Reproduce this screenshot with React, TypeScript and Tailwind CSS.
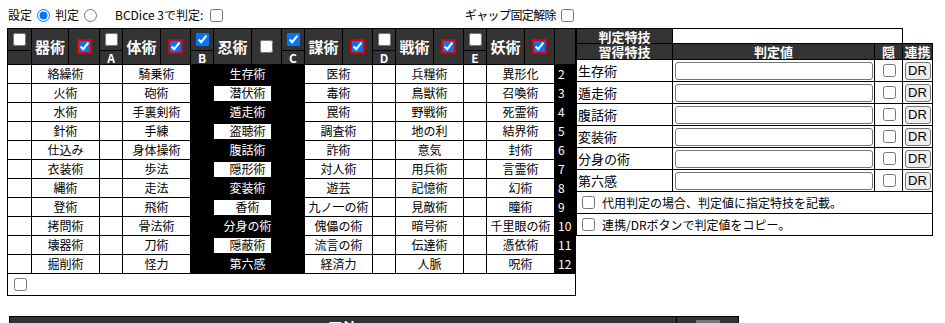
import React from "react";

const FONT = { fontFamily: '"Noto Sans CJK JP", "Liberation Sans", sans-serif' };

const cats = ["器術", "体術", "忍術", "謀術", "戦術", "妖術"];
const letters = ["", "A", "B", "C", "D", "E"];
const gapChecked = [false, false, true, true, false, false];
const catChecked = [true, true, false, true, true, true];

const rows: string[][] = [
  ["絡繰術", "騎乗術", "生存術", "医術", "兵糧術", "異形化"],
  ["火術", "砲術", "潜伏術", "毒術", "鳥獣術", "召喚術"],
  ["水術", "手裏剣術", "遁走術", "罠術", "野戦術", "死霊術"],
  ["針術", "手練", "盗聴術", "調査術", "地の利", "結界術"],
  ["仕込み", "身体操術", "腹話術", "詐術", "意気", "封術"],
  ["衣装術", "歩法", "隠形術", "対人術", "用兵術", "言霊術"],
  ["縄術", "走法", "変装術", "遊芸", "記憶術", "幻術"],
  ["登術", "飛術", "香術", "九ノ一の術", "見敵術", "瞳術"],
  ["拷問術", "骨法術", "分身の術", "傀儡の術", "暗号術", "千里眼の術"],
  ["壊器術", "刀術", "隠蔽術", "流言の術", "伝達術", "憑依術"],
  ["掘削術", "怪力", "第六感", "経済力", "人脈", "呪術"],
];

const learned = ["生存術", "遁走術", "腹話術", "変装術", "分身の術", "第六感"];

function Cb({ checked = false, red = false }: { checked?: boolean; red?: boolean }) {
  return (
    <input
      type="checkbox"
      defaultChecked={checked}
      className={
        "m-0 w-[13px] h-[13px] align-middle " +
        (red ? "outline-2 outline-solid outline-[#e00000] outline-offset-[-1px]" : "")
      }
    />
  );
}

function LeftTable() {
  const colW: number[] = [];
  for (let i = 0; i < 6; i++) {
    colW.push(23, 38, 30);
  }
  colW[0] = 24;
  colW[1] = 37;
  colW[2] = 31;
  colW.push(21);
  return (
    <table className="border-collapse table-fixed w-[568px] border border-black">
      <colgroup>
        {colW.map((w, i) => (
          <col key={i} style={{ width: w }} />
        ))}
      </colgroup>
      <tbody>
        <tr>
          {cats.map((c, i) => (
            <React.Fragment key={c}>
              <th className="bg-[#333] border border-black h-[22px] p-0 text-center">
                <div className="flex justify-center items-center">
                  <Cb checked={gapChecked[i]} />
                </div>
              </th>
              <th
                rowSpan={2}
                className="bg-[#333] border border-black p-0 text-white text-[15px] font-bold leading-none text-center"
              >
                {c}
              </th>
              <th rowSpan={2} className="bg-[#333] border border-black p-0 text-center">
                <div className="flex justify-center items-center">
                  <Cb checked={catChecked[i]} red={catChecked[i]} />
                </div>
              </th>
            </React.Fragment>
          ))}
          <th rowSpan={2} className="bg-[#333] border border-black p-0" />
        </tr>
        <tr>
          {letters.map((l, i) => (
            <th
              key={i}
              className="bg-[#333] border border-black h-[14px] p-0 text-white text-[12px] font-bold leading-none text-center"
            >
              {l}
            </th>
          ))}
        </tr>
        {rows.map((r, ri) => (
          <tr key={ri}>
            {r.map((s, ci) => {
              const ninja = ci === 2;
              const gapBlack = ci === 2 || ci === 3;
              return (
                <React.Fragment key={ci}>
                  <td
                    className={
                      "border border-black h-[19px] p-0 " + (gapBlack ? "bg-black" : "bg-white")
                    }
                  />
                  <td
                    colSpan={2}
                    className={
                      "border border-black h-[19px] p-0 text-[12px] leading-none text-center whitespace-nowrap " +
                      (ninja ? "bg-black text-white" : "bg-white text-black")
                    }
                  >
                    {ninja && !learned.includes(s) ? (
                      <div className="w-[57px] h-[15px] bg-white text-black flex items-center justify-center pl-[10px]">
                        {s}
                      </div>
                    ) : (
                      s
                    )}
                  </td>
                </React.Fragment>
              );
            })}
            <td className="border border-black bg-black text-white text-[12px] leading-none p-0 pl-[3px] h-[19px]">
              {ri + 2}
            </td>
          </tr>
        ))}
        <tr>
          <td colSpan={19} className="border border-black h-[22px] p-0 pl-[6px] bg-white">
            <div className="flex items-center">
              <Cb />
            </div>
          </td>
        </tr>
      </tbody>
    </table>
  );
}

function RightTable() {
  return (
    <table className="border-collapse table-fixed w-[356px]">
      <colgroup>
        <col style={{ width: 96 }} />
        <col style={{ width: 202 }} />
        <col style={{ width: 28 }} />
        <col style={{ width: 30 }} />
      </colgroup>
      <tbody>
        <tr>
          <th className="bg-[#333] border border-black h-[15px] p-0 text-white text-[13px] font-bold leading-[13px] text-center">
            判定特技
          </th>
          <td colSpan={2} className="border border-black bg-white p-0" />
          <td className="p-0" />
        </tr>
        <tr>
          {["習得特技", "判定値", "隠", "連携"].map((h) => (
            <th
              key={h}
              className="bg-[#333] border border-black h-[16px] p-0 text-white text-[13px] font-bold leading-[13px] text-center whitespace-nowrap"
            >
              {h}
            </th>
          ))}
        </tr>
        {learned.map((s) => (
          <tr key={s}>
            <td className="border border-black h-[22px] p-0 pl-[1px] text-[13px] leading-none text-black bg-white whitespace-nowrap">
              {s}
            </td>
            <td className="border border-black h-[22px] p-0 bg-white">
              <div className="flex justify-center items-center">
                <input
                  type="text"
                  className="w-[198px] h-[18px] border border-[#767676] rounded-[3px] bg-white px-[2px] text-[13px]"
                />
              </div>
            </td>
            <td className="border border-black h-[22px] p-0 bg-white">
              <div className="flex justify-center items-center pl-[2px]">
                <Cb />
              </div>
            </td>
            <td className="border border-black h-[22px] p-0 bg-white">
              <div className="flex justify-center items-center">
                <button
                  className="w-[26px] h-[18px] bg-[#efefef] border border-[#767676] rounded-[3px] text-[13px] leading-none text-black p-0"
                  style={{ fontFamily: '"Liberation Sans", Arial, sans-serif' }}
                >
                  DR
                </button>
              </div>
            </td>
          </tr>
        ))}
        {["代用判定の場合、判定値に指定特技を記載。", "連携/DRボタンで判定値をコピー。"].map((t) => (
          <tr key={t}>
            <td
              colSpan={4}
              className="border border-black h-[22px] p-0 pl-[5px] bg-white text-[12px] leading-none text-black"
            >
              <div className="flex items-center">
                <span className="mr-[7px] flex items-center">
                  <Cb />
                </span>
                <span>{t}</span>
              </div>
            </td>
          </tr>
        ))}
      </tbody>
    </table>
  );
}

export default function App() {
  return (
    <div className="bg-white w-[945px] h-[323px] overflow-hidden text-black" style={FONT}>
      <div className="flex items-start">
        <div className="ml-[7px] w-[568px] flex flex-col">
          <div className="h-[28px] flex items-center justify-between pt-[2px] text-[12px] leading-none">
            <div className="flex items-center pl-[1px]">
              <span>設定</span>
              <input type="radio" name="mode" defaultChecked className="m-0 ml-[5px] w-[13px] h-[13px]" />
              <span className="ml-[5px]">判定</span>
              <input type="radio" name="mode" className="m-0 ml-[5px] w-[13px] h-[13px]" />
              <span className="ml-[18px]">BCDice 3で判定:</span>
              <span className="ml-[7px] flex items-center">
                <Cb />
              </span>
            </div>
            <div className="flex items-center pr-[1px]">
              <span className="tracking-[-0.6px]">ギャップ固定解除</span>
              <span className="ml-[5px] flex items-center">
                <Cb />
              </span>
            </div>
          </div>
          <LeftTable />
        </div>
        <div className="ml-[1px] pt-[28px]">
          <RightTable />
        </div>
      </div>
      <div className="ml-[9px] mt-[20px] w-[729px]">
        <table className="border-collapse table-fixed w-[729px]">
          <colgroup>
            <col style={{ width: 667 }} />
            <col style={{ width: 62 }} />
          </colgroup>
          <tbody>
            <tr>
              <th className="bg-[#333] border border-black h-[22px] p-0 text-white text-[15px] font-bold leading-none text-center">
                忍法
              </th>
              <th className="bg-[#333] border border-black p-0">
                <div className="mx-auto w-[24px] h-[16px] bg-[#777]" />
              </th>
            </tr>
          </tbody>
        </table>
      </div>
    </div>
  );
}
